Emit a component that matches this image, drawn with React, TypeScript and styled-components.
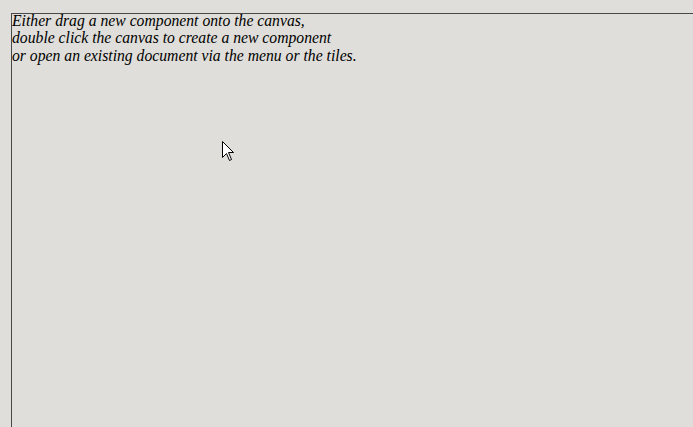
import React from "react";
import styled, { createGlobalStyle } from "styled-components";

const Global = createGlobalStyle`
  html, body {
    margin: 0;
    padding: 0;
    width: 693px;
    height: 427px;
    overflow: hidden;
    background: #dfdeda;
  }
`;

const Page = styled.div`
  width: 693px;
  height: 427px;
  padding: 13px 0 0 11px;
  box-sizing: border-box;
  position: relative;
  overflow: hidden;
`;

const Canvas = styled.div`
  width: 800px;
  height: 500px;
  border-top: 1px solid #484848;
  border-left: 1px solid #484848;
  background: #dfdeda;
  box-sizing: border-box;
`;

const Hint = styled.p`
  margin: -2px 0 0 0;
  font-family: "Liberation Serif", "Times New Roman", serif;
  font-style: italic;
  font-size: 15.7px;
  line-height: 17.3px;
  color: #000;
`;

const Cursor = styled.svg`
  position: absolute;
  left: 222px;
  top: 141px;
`;

export default function App() {
  return (
    <>
      <Global />
      <Page>
        <Canvas>
          <Hint>
            Either drag a new component onto the canvas,
            <br />
            double click the canvas to create a new component
            <br />
            or open an existing document via the menu or the tiles.
          </Hint>
        </Canvas>
        <Cursor width="14" height="22" viewBox="0 0 14 22">
          <path
            d="M0.5 0.5 L0.5 16.5 L4.5 12.5 L7.5 19.5 L9.5 18.5 L6.5 11.5 L11.5 11.5 Z"
            fill="#fff"
            stroke="#000"
            strokeWidth="1"
          />
        </Cursor>
      </Page>
    </>
  );
}
